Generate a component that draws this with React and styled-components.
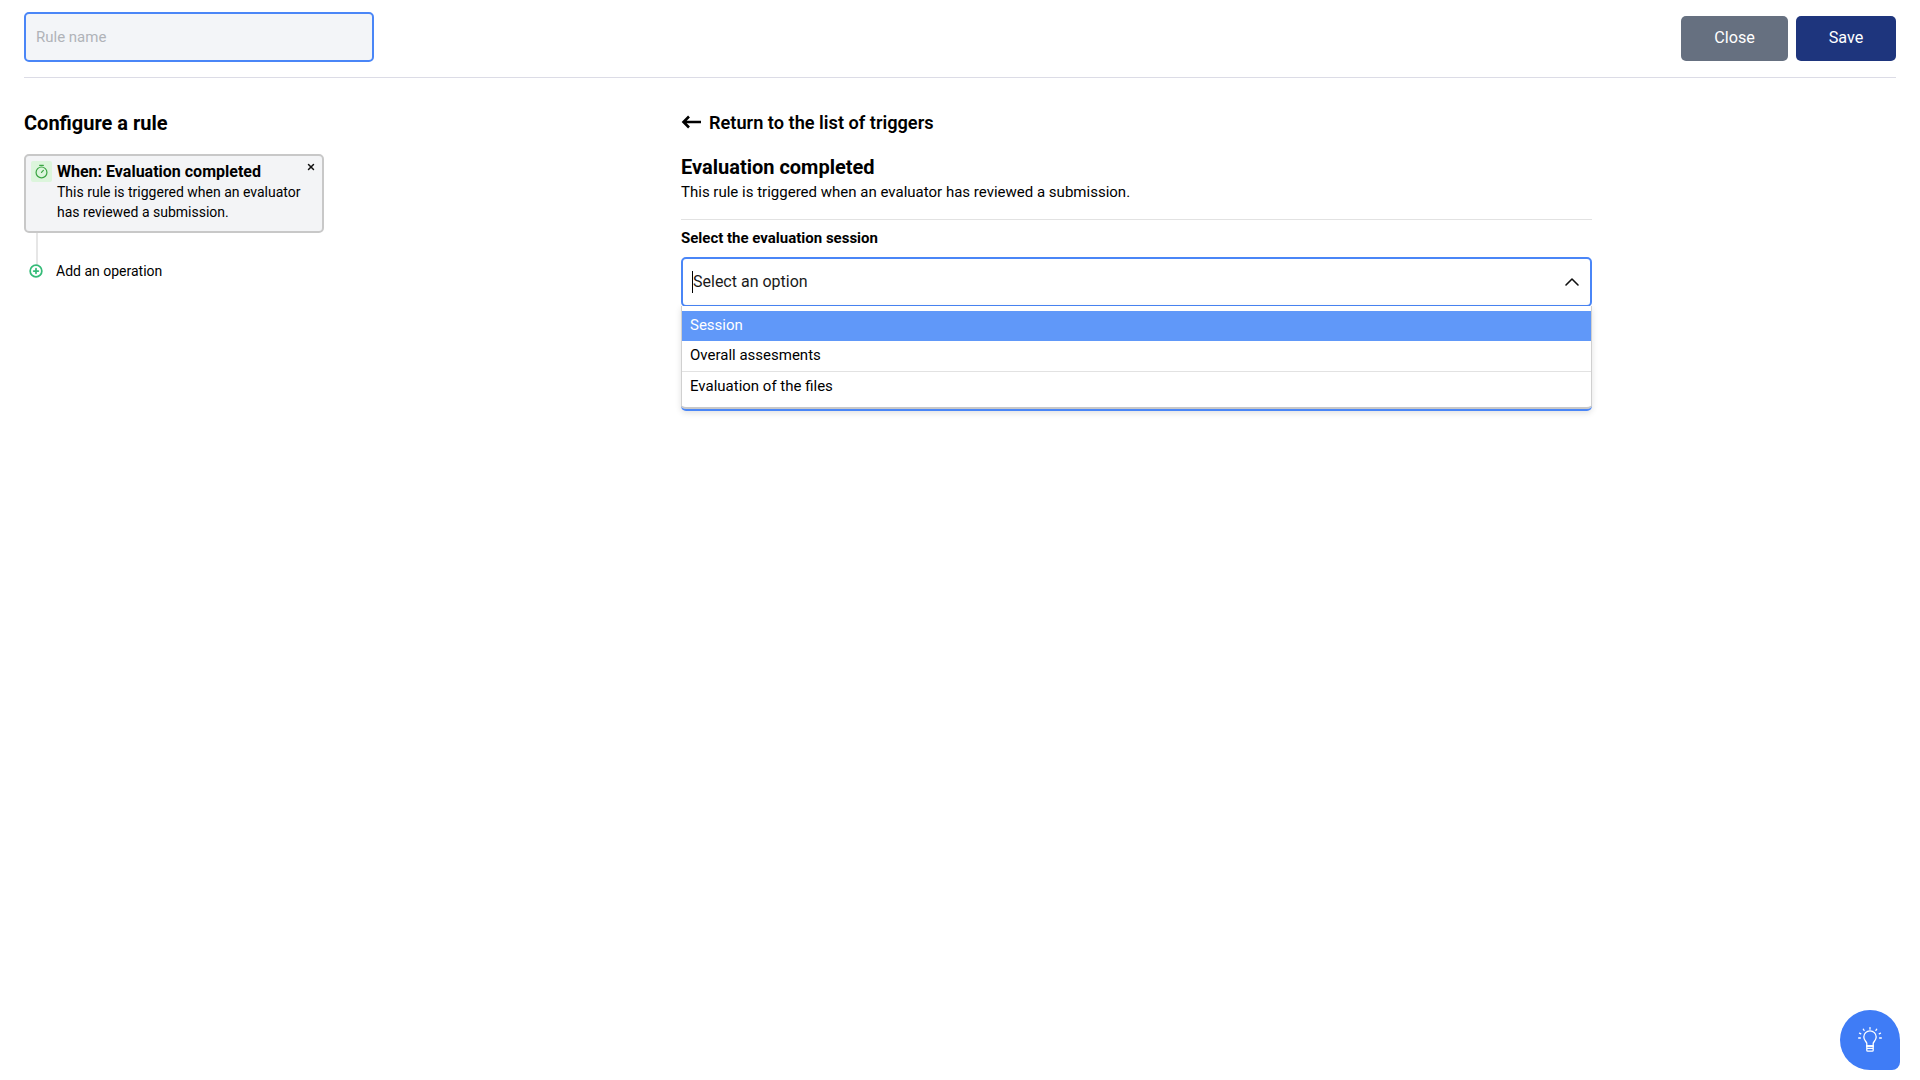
import styled, { createGlobalStyle } from 'styled-components';
import { ChevronUp, CirclePlus, X } from 'lucide-react';

const GlobalStyle = createGlobalStyle`
  html, body {
    margin: 0;
    background: #fff;
    font-family: Roboto, "Liberation Sans", sans-serif;
    color: #000;
  }
  * { box-sizing: border-box; }
`

const Page = styled.div`
  height: 1080px;
  padding: 12px 24px 0;
  overflow: hidden;
`

const Header = styled.header`
  display: flex;
  justify-content: space-between;
  align-items: flex-start;
  height: 66px;
  border-bottom: 1px solid #dcdce6;
`

const NameInput = styled.input`
  width: 350px;
  height: 50px;
  padding: 0 10px;
  background: #f3f5f8;
  border: 2px solid #4a86f7;
  border-radius: 5px;
  outline: none;
  font: 400 15px Roboto, sans-serif;
  &::placeholder { color: #b0b3b8; opacity: 1; }
`

const Actions = styled.div`
  display: flex;
  gap: 8px;
  padding-top: 4px;
`

const Button = styled.button`
  width: ${p => p.$width}px;
  height: 45px;
  padding: 0 0 2px;
  border: 0;
  border-radius: 5px;
  background: ${p => p.$bg};
  color: #fff;
  font: 400 16.2px Roboto, sans-serif;
`

const Columns = styled.main`
  display: grid;
  grid-template-columns: 657px 911px;
  padding-top: 32px;
`

const Heading = styled.h1`
  margin: 0;
  font-size: 20px;
  line-height: 26px;
  font-weight: 700;
`

const RuleCard = styled.div`
  position: relative;
  display: flex;
  gap: 5px;
  width: 300px;
  height: 79px;
  margin-top: 18px;
  padding: 5px 5px;
  background: #f3f4f6;
  border: 2px solid #c8c8c8;
  border-radius: 5px;
`

const TimerBox = styled.div`
  flex: none;
  display: flex;
  align-items: center;
  justify-content: center;
  width: 21px;
  height: 21px;
  background: #dcf5dc;
  border-radius: 2px;
`

const CardTitle = styled.div`
  font-size: 16px;
  line-height: 21px;
  font-weight: 700;
`

const CardText = styled.div`
  font-size: 14px;
  line-height: 20px;
  color: #000;
`

const CloseCard = styled.span`
  position: absolute;
  top: 6px;
  right: 6px;
  display: flex;
`

const Connector = styled.div`
  width: 2px;
  height: 32px;
  margin-left: 12px;
  background: #e6e6e6;
`

const AddRow = styled.div`
  display: flex;
  align-items: center;
  gap: 13px;
  margin: -4px 0 0 5px;
  font-size: 14px;
  line-height: 20px;
`

const BackLink = styled.div`
  display: flex;
  align-items: center;
  gap: 8px;
  height: 24px;
  font-size: 18.2px;
  font-weight: 600;
`

const Title = styled.h2`
  margin: 20px 0 0;
  font-size: 20px;
  line-height: 26px;
  font-weight: 700;
`

const Description = styled.p`
  margin: 2px 0 0;
  padding-bottom: 17px;
  border-bottom: 1px solid #e2e2e2;
  font-size: 15.03px;
  line-height: 20px;
  color: #000;
`

const Label = styled.div`
  margin-top: 8px;
  font-size: 15px;
  line-height: 20px;
  font-weight: 700;
`

const SelectBox = styled.div`
  position: relative;
  margin-top: 9px;
`

const Control = styled.div`
  display: flex;
  align-items: center;
  justify-content: space-between;
  height: 50px;
  padding: 0 6px 0 9px;
  border: 2px solid #4a86f7;
  border-radius: 5px;
  font-size: 16px;
  color: #1a1a1a;
`

const Placeholder = styled.span`
  border-left: 1px solid #000;
  line-height: 22px;
`

const Menu = styled.div`
  position: absolute;
  top: 49px;
  left: 0;
  right: 0;
  height: 105px;
  padding-top: 5px;
  background: #fff;
  border: solid #4a86f7;
  border-width: 0 0 2px;
  border-radius: 0 0 5px 5px;
  box-shadow: inset 1px 0 0 #d0d0d0, inset -1px 0 0 #d0d0d0, inset 0 -2px 0 #c8c8c8, 0 2px 6px rgba(0, 0, 0, .12);
`

const Option = styled.div`
  height: ${p => p.$height}px;
  margin: 0 1px;
  padding-left: 8px;
  line-height: 28px;
  font-size: 15px;
  background: ${p => (p.$active ? '#6098f9' : 'transparent')};
  color: ${p => (p.$active ? '#fff' : '#000')};
  border-bottom: ${p => (p.$line ? '1px solid #e2e2e2' : '0')};
`

const HelpButton = styled.button`
  position: fixed;
  left: 1840px;
  top: 1010px;
  display: flex;
  align-items: center;
  justify-content: center;
  width: 60px;
  height: 60px;
  padding: 0;
  border: 0;
  background: #3f7cf6;
  border-radius: 50% 50% 8px 50%;
`

const TimerIcon = () => (
  <svg width="15" height="15" viewBox="0 0 16 16" fill="none" stroke="#3da645" strokeWidth="1.3" strokeLinecap="round">
    <circle cx="8" cy="9" r="5.8" />
    <path d="M6 1.4h4M8 9l2-2.2" />
  </svg>
)

const ArrowLeftIcon = () => (
  <svg width="20" height="14" viewBox="0 0 20 14" fill="none" stroke="#000" strokeWidth="2.6">
    <path d="M20 7H2.5M8 1.5 2.5 7 8 12.5" />
  </svg>
)

const BulbIcon = () => (
  <svg width="24" height="26" viewBox="0 0 24 26" fill="none" stroke="#fff" strokeWidth="1.3" strokeLinecap="round">
    <path d="M8.8 19v-2.6c0-1.5-3-3-3-6.4a6.2 6.2 0 0 1 12.4 0c0 3.4-3 4.900-3 6.400V19z" />
    <path d="M8.800 19h6.400v4.200a1 1 0 0 1-1 1H9.800a1 1 0 0 1-1-1zM8.800 21.400h6.400" />
    <path d="M12 .6v1.600M5.300 2.200l.8 1.300M18.700 2.200l-.8 1.300M1.500 6.200l1.300.6M22.500 6.200l-1.300.6M.6 11h1.800M21.600 11h1.800" />
  </svg>
)

const App = () => {
  return (
    <Page>
      <GlobalStyle />
      <Header>
        <NameInput placeholder="Rule name" />
        <Actions>
          <Button $width={107} $bg="#667080">Close</Button>
          <Button $width={100} $bg="#1e357d">Save</Button>
        </Actions>
      </Header>
      <Columns>
        <section>
          <Heading>Configure a rule</Heading>
          <RuleCard>
            <TimerBox><TimerIcon /></TimerBox>
            <div>
              <CardTitle>When: Evaluation completed</CardTitle>
              <CardText>This rule is triggered when an evaluator has reviewed a submission.</CardText>
            </div>
            <CloseCard><X size={10} strokeWidth={3.5} color="#111" /></CloseCard>
          </RuleCard>
          <Connector />
          <AddRow>
            <CirclePlus size={14} strokeWidth={3} color="#35bb78" />
            Add an operation
          </AddRow>
        </section>
        <section>
          <BackLink><ArrowLeftIcon />Return to the list of triggers</BackLink>
          <Title>Evaluation completed</Title>
          <Description>This rule is triggered when an evaluator has reviewed a submission.</Description>
          <Label>Select the evaluation session</Label>
          <SelectBox>
            <Control>
              <Placeholder>Select an option</Placeholder>
              <ChevronUp size={24} strokeWidth={1.6} color="#111" />
            </Control>
            <Menu>
              <Option $active $height={30}>Session</Option>
              <Option $line $height={31}>Overall assesments</Option>
              <Option $height={30}>Evaluation of the files</Option>
            </Menu>
          </SelectBox>
        </section>
      </Columns>
      <HelpButton><BulbIcon /></HelpButton>
    </Page>
  )
}

export default App;
